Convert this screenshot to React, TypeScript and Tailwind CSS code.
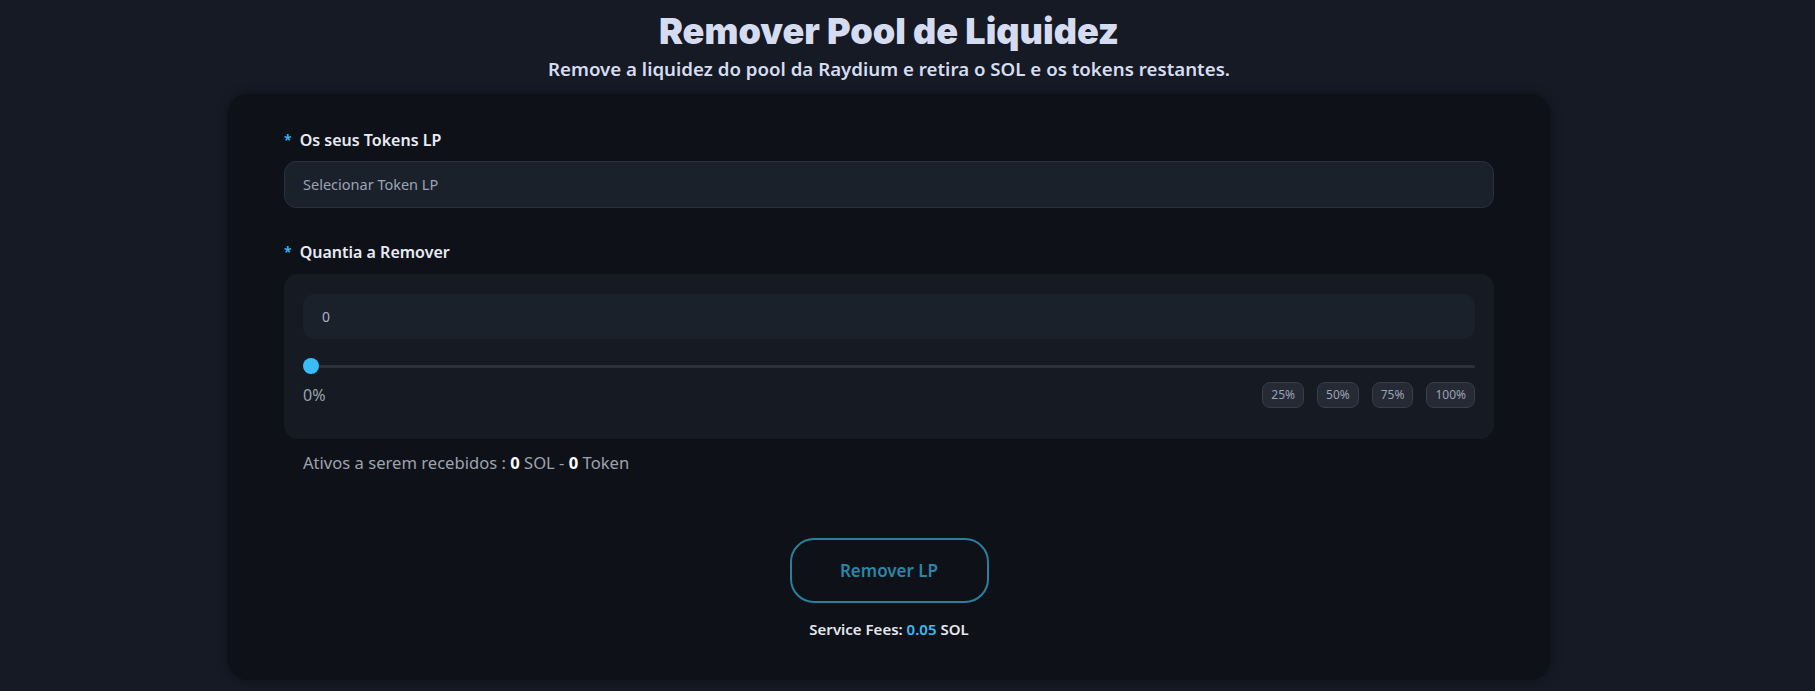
export default function App() {
  const presets = ['25%', '50%', '75%', '100%'];

  return (
    <div className="min-h-screen bg-[#151a24] text-[#e5e7eb]" style={{ fontFamily: '"Noto Sans", "Open Sans", sans-serif' }}>
      <div className="w-[1778px] flex flex-col items-center pt-[8px] pb-[13px]">
        <h1
          className="text-[36px] leading-[46px] font-black text-[#d6dcf0]"
          style={{ fontFamily: 'Inter, "Noto Sans", sans-serif' }}
        >
          Remover Pool de Liquidez
        </h1>
        <p className="text-[18.7px] leading-[26px] font-semibold text-[#d6dcf0] mt-[2px]">
          Remove a liquidez do pool da Raydium e retira o SOL e os tokens restantes.
        </p>

        <div className="mt-[12px] w-[1322px] bg-[#0f1119] rounded-[20px] px-[56px] pt-[35px] pb-[41px] shadow-[0_0_12px_rgba(0,0,0,0.35)]">
          <label className="flex items-center gap-[8px] text-[16px] leading-[22px] font-semibold text-[#e8ebf3]">
            <span className="text-[#38bdf8] text-[14px]">*</span>
            Os seus Tokens LP
          </label>
          <div className="mt-[10px] h-[47px] rounded-[12px] bg-[#1b212b] border border-[#2a313c] flex items-center px-[18px] text-[14.5px] text-[#9aa3b5]">
            Selecionar Token LP
          </div>

          <label className="mt-[33px] flex items-center gap-[8px] text-[16px] leading-[22px] font-semibold text-[#e8ebf3]">
            <span className="text-[#38bdf8] text-[14px]">*</span>
            Quantia a Remover
          </label>
          <div className="mt-[11px] rounded-[14px] bg-[#151a23] px-[19px] pt-[20px] pb-[31px]">
            <div className="h-[45px] rounded-[12px] bg-[#1b212b] flex items-center px-[19px] text-[14px] text-[#aab2c2]">
              0
            </div>
            <div className="relative mt-[19px] h-[16px] flex items-center">
              <div className="w-full h-[3px] rounded-full bg-[#2b303b]" />
              <div className="absolute left-0 top-0 w-[16px] h-[16px] rounded-full bg-[#38bdf8]" />
            </div>
            <div className="mt-[8px] flex items-center justify-between">
              <span className="text-[16px] text-[#9ca3af]">0%</span>
              <div className="flex gap-[13px]">
                {presets.map((p) => (
                  <button
                    key={p}
                    className="h-[26px] px-[8px] rounded-[8px] bg-[#252a34] border border-[#373d49] text-[12px] text-[#9aa3b5]"
                  >
                    {p}
                  </button>
                ))}
              </div>
            </div>
          </div>

          <p className="mt-[13px] pl-[19px] text-[16.6px] leading-[22px] text-[#9ca3af]">
            Ativos a serem recebidos : <span className="font-bold text-white">0</span> SOL -{' '}
            <span className="font-bold text-white">0</span> Token
          </p>

          <div className="mt-[64px] flex flex-col items-center">
            <button className="w-[199px] h-[65px] rounded-[24px] border-2 border-[#2a7f9c] text-[17px] font-semibold text-[#2b86a6]">
              Remover LP
            </button>
            <p className="mt-[16px] text-[15px] leading-[20px] font-semibold text-[#e5e7eb]">
              Service Fees: <span className="text-[#38bdf8]">0.05</span> SOL
            </p>
          </div>
        </div>
      </div>
    </div>
  );
}
